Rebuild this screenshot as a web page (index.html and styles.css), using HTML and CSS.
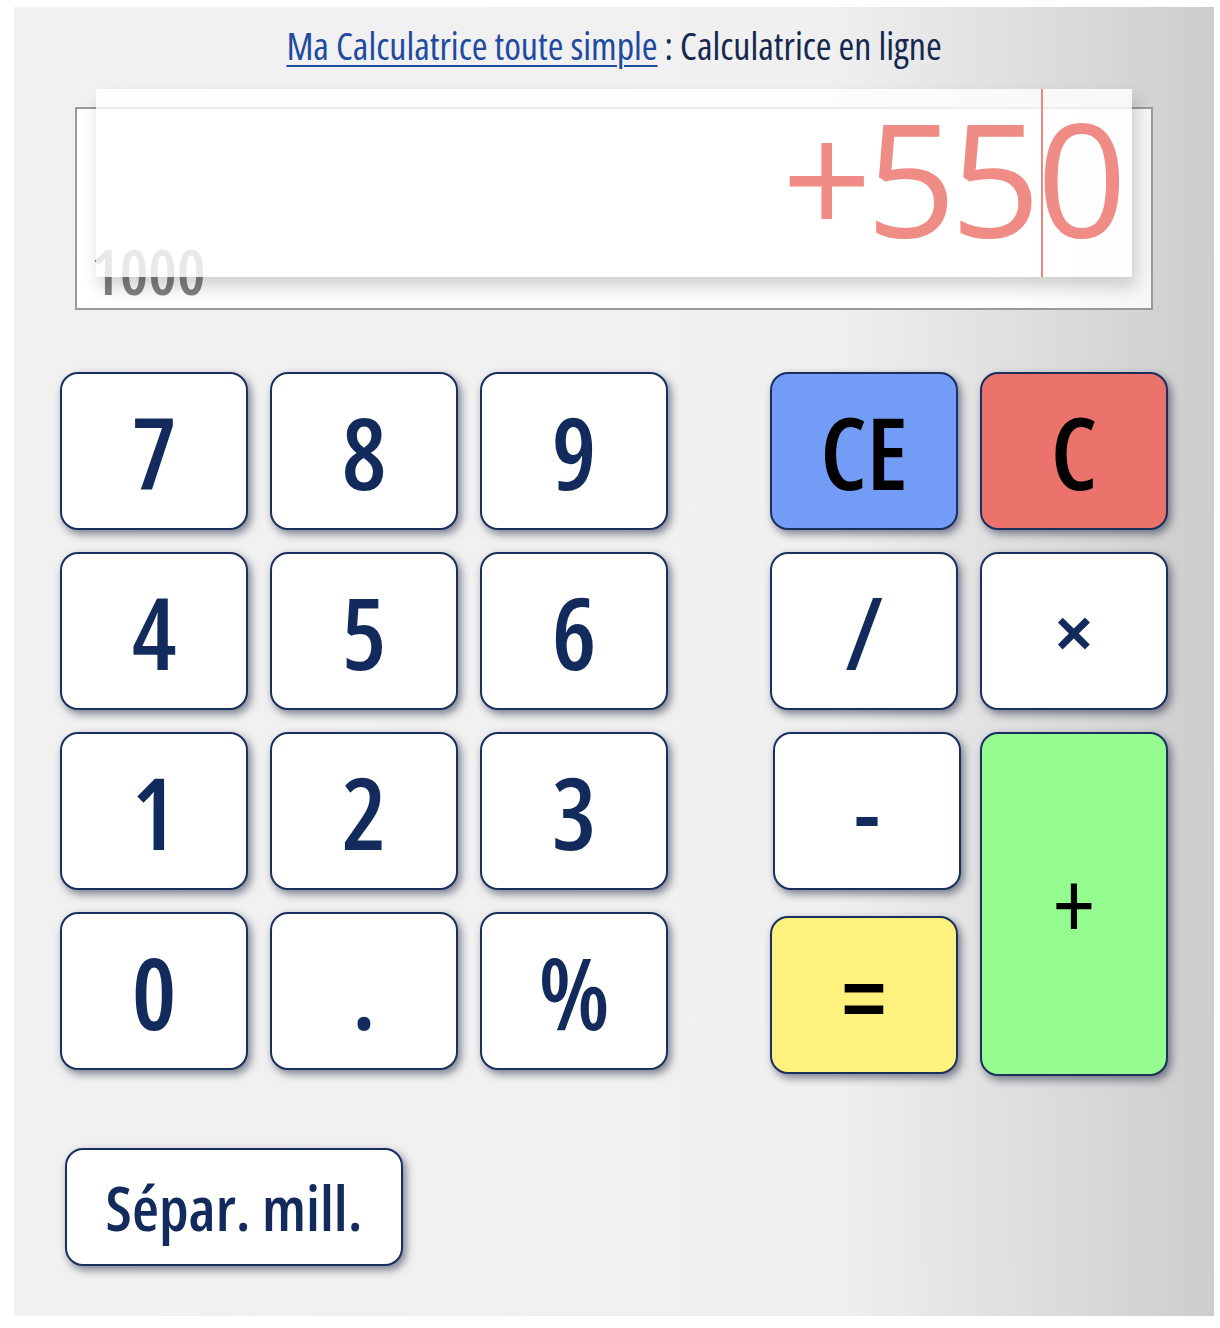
FILE: index.html
```html
<!DOCTYPE html>
<html lang="fr">
<head>
<meta charset="utf-8">
<title>Ma Calculatrice toute simple</title>
<link rel="stylesheet" href="styles.css">
</head>
<body>
<div class="page">
  <h1 class="title"><a href="#" class="title-link">Ma Calculatrice toute simple</a> : Calculatrice en ligne</h1>

  <div class="display">
    <div class="memo">1000</div>
    <div class="screen">
      <span class="screen-text">+55</span><span class="caret"></span><span class="screen-text">0</span>
    </div>
  </div>

  <div class="keypad">
    <button class="key k7">7</button>
    <button class="key k8">8</button>
    <button class="key k9">9</button>
    <button class="key kce">CE</button>
    <button class="key kc">C</button>

    <button class="key k4">4</button>
    <button class="key k5">5</button>
    <button class="key k6">6</button>
    <button class="key kdiv">/</button>
    <button class="key kmul">×</button>

    <button class="key k1">1</button>
    <button class="key k2">2</button>
    <button class="key k3">3</button>
    <button class="key kmin">-</button>
    <button class="key kplus">+</button>

    <button class="key k0">0</button>
    <button class="key kdot">.</button>
    <button class="key kpct">%</button>
    <button class="key keq">=</button>
  </div>

  <button class="key sep">Sépar. mill.</button>
</div>
</body>
</html>
```

FILE: styles.css
```css
html, body {
  margin: 0;
  padding: 0;
  background: #ffffff;
}

body {
  font-family: "Open Sans", "Noto Sans", "DejaVu Sans", sans-serif;
  font-stretch: 75%;
}

.page {
  box-sizing: border-box;
  margin: 7px 6px 0 14px;
  width: 1200px;
  height: 1309px;
  padding: 15px 0 0 0;
  background: linear-gradient(to right, #f1f1f1 0%, #f0f0f0 68%, #cdcdcd 100%);
  display: flex;
  flex-direction: column;
}

.title {
  margin: 0;
  text-align: center;
  font-size: 38px;
  line-height: 46px;
  font-weight: normal;
  font-stretch: 77.5%;
  color: #15294f;
}

.title-link {
  color: #1e4aa0;
  text-decoration: underline;
  text-decoration-thickness: 2px;
  text-underline-offset: 5px;
}

.display {
  position: relative;
  box-sizing: border-box;
  margin: 39px 0 0 61px;
  width: 1078px;
  height: 203px;
  border: 2px solid #9a9a9a;
  background: linear-gradient(to right, #ffffff 85%, #f6f6f6 100%);
}

.memo {
  position: absolute;
  left: 14px;
  top: 126px;
  font-size: 64px;
  line-height: 72px;
  font-weight: 600;
  color: #808080;
}

.screen {
  position: absolute;
  left: 19px;
  top: -20px;
  width: 1036px;
  height: 188px;
  background: rgba(255, 255, 255, 0.82);
  box-shadow: 4px 10px 16px rgba(0, 0, 0, 0.18);
  box-sizing: border-box;
  padding-right: 11px;
  display: flex;
  justify-content: flex-end;
  align-items: center;
}

.screen-text {
  font-size: 158px;
  line-height: 176px;
  font-stretch: 92%;
  letter-spacing: -6px;
  color: #f08c86;
  margin-top: -14px;
}

.caret {
  align-self: stretch;
  width: 0;
  margin-left: 6px;
  margin-right: -6px;
  border-left: 2px solid #ec8680;
}

.keypad {
  margin: 62px 0 0 46px;
  display: grid;
  grid-template-columns: 188px 188px 188px 188px 188px;
  grid-template-rows: 158px 158px 158px 158px;
  column-gap: 22px;
  row-gap: 22px;
}

.kce, .kdiv, .kmin, .keq { grid-column: 4; margin-left: 80px; margin-right: -80px; }
.kc, .kmul, .kplus { grid-column: 5; margin-left: 80px; margin-right: -80px; }
.kplus { grid-row: 3 / span 2; height: 344px; }
.keq { grid-row: 4; margin-top: 4px; margin-bottom: -4px; }
.kmin { margin-left: 83px; margin-right: -83px; }

.key {
  box-sizing: border-box;
  border: 2px solid #1b2f5e;
  border-radius: 18px;
  background: #ffffff;
  box-shadow: 3px 4px 9px rgba(25, 35, 60, 0.55);
  color: #132b5c;
  font-family: inherit;
  font-stretch: 75%;
  font-size: 100px;
  font-weight: 600;
  line-height: 1;
  padding: 0;
  display: flex;
  align-items: center;
  justify-content: center;
  cursor: pointer;
}

.kce { background: #739cf7; color: #000000; }
.kc { background: #ec736b; color: #000000; }
.keq { background: #fdf27e; color: #000000; }
.kplus { background: #95fd8f; color: #000000; font-size: 96px; font-weight: 500; }
.kmul { font-size: 84px; }
.kmin { font-size: 90px; }

.sep {
  margin: 78px 0 0 51px;
  width: 338px;
  height: 118px;
  font-size: 62px;
  white-space: nowrap;
}
```
